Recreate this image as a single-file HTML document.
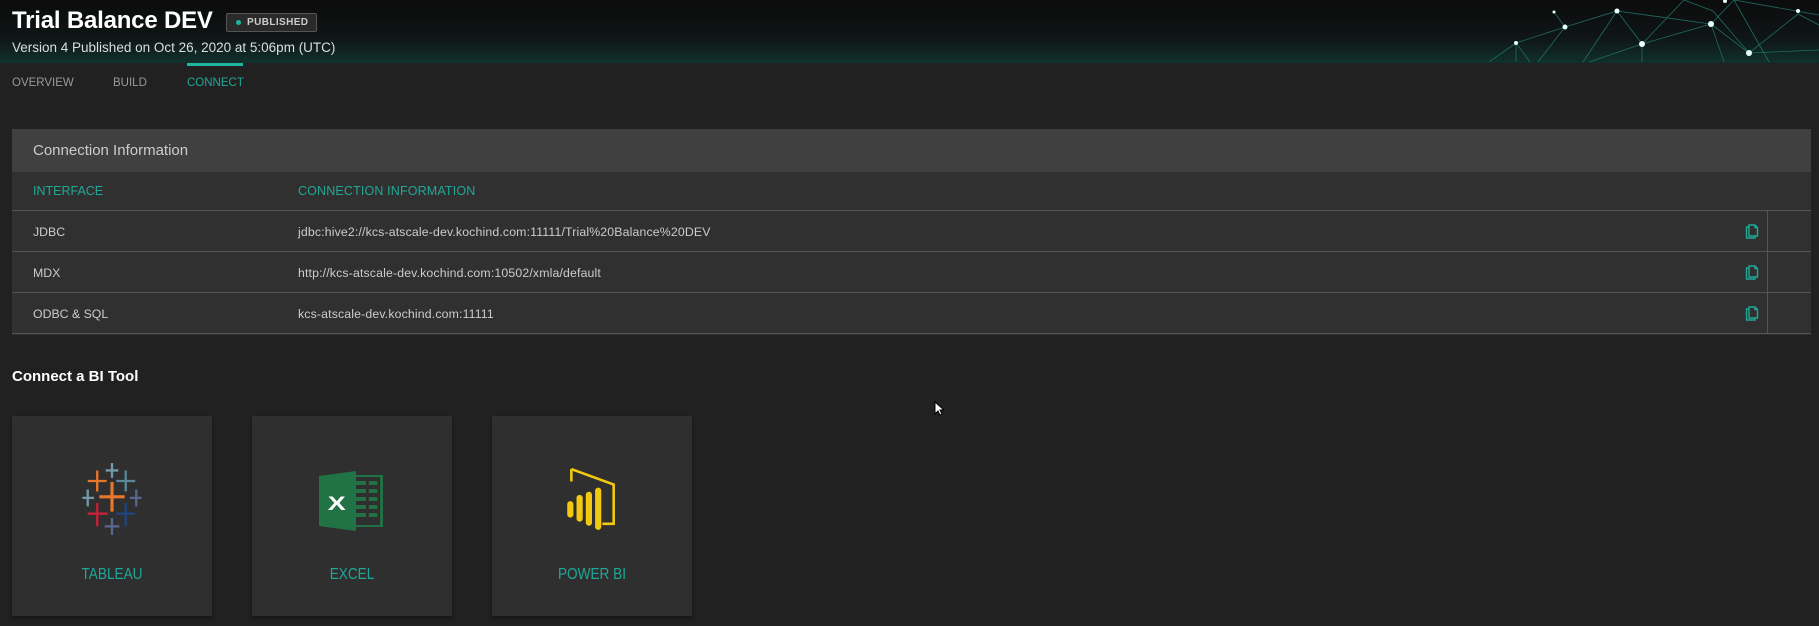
<!DOCTYPE html>
<html><head><meta charset="utf-8"><style>
*{margin:0;padding:0;box-sizing:border-box}
body{width:1819px;height:626px;background:#212121;font-family:"Liberation Sans",sans-serif;position:relative;overflow:hidden;color:#ddd}
.hdr{position:absolute;left:0;top:0;width:1819px;height:63px;background:linear-gradient(#0c0c0c,#0f1515 60%,#10312d)}
.t{position:absolute;left:12px;top:7px;font-size:24px;font-weight:bold;color:#fff;letter-spacing:-0.2px}
.badge{position:absolute;left:226px;top:13px;width:91px;height:19px;border:1px solid #555;background:#2a2a2a;border-radius:2px;font-size:10px;font-weight:bold;color:#ccc;padding:3px 0 0 20px;letter-spacing:.4px}
.badge:before{content:"";position:absolute;left:9px;top:6px;width:5px;height:5px;border-radius:50%;background:#1fb5a0}
.sub{position:absolute;left:12px;top:40px;font-size:13.5px;color:#ddd}
.tab{position:absolute;top:77px;font-size:11.5px;color:#999}
.ul{position:absolute;left:187px;top:63px;width:56px;height:3px;background:#1fb5a0}
.panel{position:absolute;left:12px;top:129px;width:1799px;height:206px;background:#303030}
.ph{height:43px;background:#404040;font-size:15px;color:#ccc;padding:13px 0 0 21px}
.ch{height:39px;font-size:12.5px;color:#1fa898;position:relative;border-bottom:1px solid #555}
.ch .c1,.ch .c2{top:12px}
.row{height:41px;border-bottom:1px solid #555;position:relative;font-size:12.3px;color:#ccc}
.c1{position:absolute;left:21px;top:14px}.c2{position:absolute;left:286px;top:14px;letter-spacing:.15px}
.vd{position:absolute;left:1755px;top:0;width:1px;height:40px;background:#555}
.cp{position:absolute;left:1733px;top:13px}
.bt{position:absolute;left:12px;top:368px;font-size:15px;font-weight:bold;color:#fff}
.card{position:absolute;top:416px;width:200px;height:200px;background:#2f2f2f;box-shadow:0 2px 4px rgba(0,0,0,.4)}
.lbl{position:absolute;left:0;width:100%;top:150px;text-align:center;font-size:16px;color:#1fa898;transform:scaleX(.85)}
.ic{position:absolute;left:62px;top:46px}
</style></head><body>
<div class="hdr">
<svg width="330" height="63" style="position:absolute;left:1489px;top:0" stroke="#1f6d63" stroke-width="0.8" fill="none">
<path d="M0 62 L27 43 L76 27 L128 11 L153 44 L195 0 L224 11 L260 53 L309 14 M27 43 L41 62 M76 27 L49 62 M128 11 L94 62 M128 11 L222 24 L260 53 L330 50 M153 44 L222 24 L245 0 L330 15 M153 44 L153 62 M153 44 L100 62 M245 0 L280 62 M65 12 L76 27 M222 24 L235 62 M309 14 L330 25 M27 43 L27 62"/>
<g fill="#e8fffb" stroke="none"><circle cx="27" cy="43" r="2"/><circle cx="76" cy="27" r="2.5"/><circle cx="128" cy="11" r="2.5"/><circle cx="153" cy="44" r="3"/><circle cx="222" cy="24" r="3"/><circle cx="260" cy="53" r="3"/><circle cx="309" cy="11" r="2"/><circle cx="65" cy="12" r="1.5"/><circle cx="236" cy="1" r="2"/></g></svg>
<div class="t">Trial Balance DEV</div>
<div class="badge">PUBLISHED</div>
<div class="sub">Version 4 Published on Oct 26, 2020 at 5:06pm (UTC)</div>
</div>
<div class="ul"></div>
<div class="tab" style="left:12px">OVERVIEW</div>
<div class="tab" style="left:113px">BUILD</div>
<div class="tab" style="left:187px;color:#1fa898">CONNECT</div>
<div class="panel">
<div class="ph">Connection Information</div>
<div class="ch"><span class="c1">INTERFACE</span><span class="c2">CONNECTION INFORMATION</span></div>
<div class="row"><span class="c1">JDBC</span><span class="c2">jdbc:hive2://kcs-atscale-dev.kochind.com:11111/Trial%20Balance%20DEV</span><svg class="cp" width="14" height="15" viewBox="0 0 14 15" fill="none" stroke="#1fa898" stroke-width="1.4"><path d="M4 3H1.5V14H10V12"/><path d="M4 1H10L12.5 3.5V12H4Z"/><path d="M10 1V3.5H12.5"/></svg><div class="vd"></div></div>
<div class="row"><span class="c1">MDX</span><span class="c2">http://kcs-atscale-dev.kochind.com:10502/xmla/default</span><svg class="cp" width="14" height="15" viewBox="0 0 14 15" fill="none" stroke="#1fa898" stroke-width="1.4"><path d="M4 3H1.5V14H10V12"/><path d="M4 1H10L12.5 3.5V12H4Z"/><path d="M10 1V3.5H12.5"/></svg><div class="vd"></div></div>
<div class="row"><span class="c1">ODBC &amp; SQL</span><span class="c2">kcs-atscale-dev.kochind.com:11111</span><svg class="cp" width="14" height="15" viewBox="0 0 14 15" fill="none" stroke="#1fa898" stroke-width="1.4"><path d="M4 3H1.5V14H10V12"/><path d="M4 1H10L12.5 3.5V12H4Z"/><path d="M10 1V3.5H12.5"/></svg><div class="vd"></div></div>
</div>
<div class="bt">Connect a BI Tool</div>
<div class="card" style="left:12px">
<svg class="ic" width="76" height="76" viewBox="-1 -1 58 72" stroke-width="2.2" fill="none">
<path d="M28 18V46M16 32H40" stroke="#e8762b" stroke-width="3"/>
<path d="M14 7V27M5 17H23" stroke="#e8762b"/>
<path d="M41 7V27M32 17H50" stroke="#5b879b"/>
<path d="M28 0V14M22 7H34" stroke="#7199a6"/>
<path d="M5 25V41M0 33H11" stroke="#7199a6"/>
<path d="M51 25V41M45 33H56" stroke="#5b6591"/>
<path d="M14 38V60M5 48H24" stroke="#c72037"/>
<path d="M41 38V60M32 48H50" stroke="#1f447e"/>
<path d="M28 52V68M21 60H35" stroke="#5b6591"/>
</svg>
<div class="lbl">TABLEAU</div></div>
<div class="card" style="left:252px">
<svg class="ic" style="left:67px;top:54px" width="64" height="62" viewBox="0 0 45 62" preserveAspectRatio="none">
<rect x="22" y="6" width="22" height="50" fill="none" stroke="#217346" stroke-width="2"/>
<g fill="#217346"><rect x="26" y="11" width="7" height="4"/><rect x="35" y="11" width="6" height="4"/><rect x="26" y="19" width="7" height="4"/><rect x="35" y="19" width="6" height="4"/><rect x="26" y="27" width="7" height="4"/><rect x="35" y="27" width="6" height="4"/><rect x="26" y="35" width="7" height="4"/><rect x="35" y="35" width="6" height="4"/><rect x="26" y="43" width="7" height="4"/><rect x="35" y="43" width="6" height="4"/></g>
<path d="M0 6L26 1V61L0 56Z" fill="#217346"/>
<text x="12.5" y="40" font-family="Liberation Sans" font-weight="bold" font-size="19" fill="#fff" text-anchor="middle">X</text>
</svg>
<div class="lbl">EXCEL</div></div>
<div class="card" style="left:492px">
<svg class="ic" style="left:68px;top:51px" width="64" height="64" viewBox="-1 0 50 62" fill="#f2c811">
<path d="M4 2V14" stroke="#f2c811" stroke-width="2.5"/>
<path d="M4 2L45 17V55H34" fill="none" stroke="#f2c811" stroke-width="2.5"/>
<rect x="0" y="33" width="6" height="16" rx="3"/><rect x="9" y="27" width="6" height="26" rx="3"/><rect x="18" y="24" width="6" height="33" rx="3"/><rect x="27" y="20" width="6" height="41" rx="3"/>
</svg>
<div class="lbl">POWER BI</div></div>
<svg style="position:absolute;left:934px;top:401px" width="10" height="15" viewBox="0 0 10 15"><path d="M1 1V13L4 10L6 14L8 13L6 9H10Z" fill="#fff" stroke="#000" stroke-width="1"/></svg>
</body></html>
